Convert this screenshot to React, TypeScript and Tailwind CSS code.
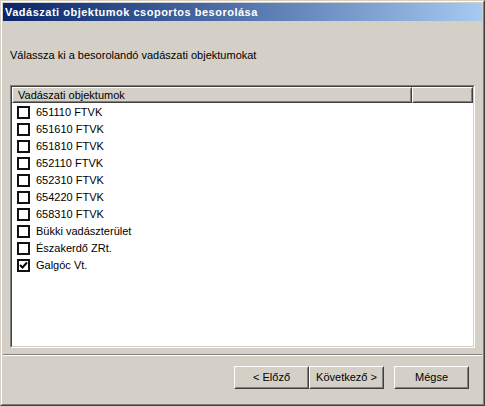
import React from 'react';

const ITEMS: Array<{ label: string; checked?: boolean }> = [
  { label: '651110 FTVK' },
  { label: '651610 FTVK' },
  { label: '651810 FTVK' },
  { label: '652110 FTVK' },
  { label: '652310 FTVK' },
  { label: '654220 FTVK' },
  { label: '658310 FTVK' },
  { label: 'Bükki vadászterület' },
  { label: 'Északerdő ZRt.' },
  { label: 'Galgóc Vt.', checked: true },
];

function CheckBox({ checked }: { checked?: boolean }) {
  return (
    <div className="w-[13px] h-[13px] border-2 border-[#111] bg-white flex items-center justify-center">
      {checked && (
        <svg width="9" height="9" viewBox="0 0 9 9">
          <path d="M1 4 L3.5 6.5 L8 1.5" fill="none" stroke="#000" strokeWidth="2" />
        </svg>
      )}
    </div>
  );
}

function Button({ label, w }: { label: string; w: string }) {
  return (
    <div className={`${w} h-[23px] border border-white border-r-[#404040] border-b-[#404040]`}>
      <div className="h-full border border-transparent border-r-[#808080] border-b-[#808080] flex items-center justify-center text-[11px] text-black">
        {label}
      </div>
    </div>
  );
}

export default function App() {
  return (
    <div
      className="w-[485px] h-[406px] bg-[#d4d0c8] border border-[#d4d0c8] border-r-[#404040] border-b-[#404040]"
      style={{ fontFamily: '"Liberation Sans", Arial, sans-serif' }}
    >
      <div className="h-full border border-white border-r-[#808080] border-b-[#808080] p-px flex flex-col">
        <div className="h-[18px] bg-gradient-to-r from-[#0a246a] to-[#a6caf0] flex items-center pl-[2px]">
          <span className="text-white font-bold text-[11px] tracking-[0.5px]">Vadászati objektumok csoportos besorolása</span>
        </div>

        <div className="mt-[28px] ml-[7px] text-[11px] text-black leading-[13px]">
          Válassza ki a besorolandó vadászati objektumokat
        </div>

        <div className="mt-[23px] ml-[7px] w-[465px] h-[263px] border border-[#808080] border-r-white border-b-white">
          <div className="h-full border border-[#404040] border-r-[#d4d0c8] border-b-[#d4d0c8] bg-white flex flex-col">
            <div className="flex h-[16px] bg-[#d4d0c8]">
              <div className="w-[400px] border border-white border-r-[#404040] border-b-[#404040]">
                <div className="h-full border border-transparent border-r-[#808080] border-b-[#808080] pl-[4px] text-[11px] leading-[12px] text-black">
                  Vadászati objektumok
                </div>
              </div>
              <div className="w-[61px] border border-white border-r-[#404040] border-b-[#404040]">
                <div className="h-full border border-transparent border-r-[#808080] border-b-[#808080]" />
              </div>
            </div>
            <div className="mt-px flex flex-col">
              {ITEMS.map(item => (
                <div key={item.label} className="h-[17px] flex items-center pl-[5px] gap-[6px] text-[11px] text-black">
                  <CheckBox checked={item.checked} />
                  <span>{item.label}</span>
                </div>
              ))}
            </div>
          </div>
        </div>

        <div className="mt-[6px] border-t border-[#808080] border-b border-b-white" />

        <div className="mt-[10px] ml-[231px] flex">
          <Button label="< Előző" w="w-[75px]" />
          <Button label="Következő >" w="w-[75px]" />
          <div className="w-[10px]" />
          <Button label="Mégse" w="w-[75px]" />
        </div>
      </div>
    </div>
  );
}
